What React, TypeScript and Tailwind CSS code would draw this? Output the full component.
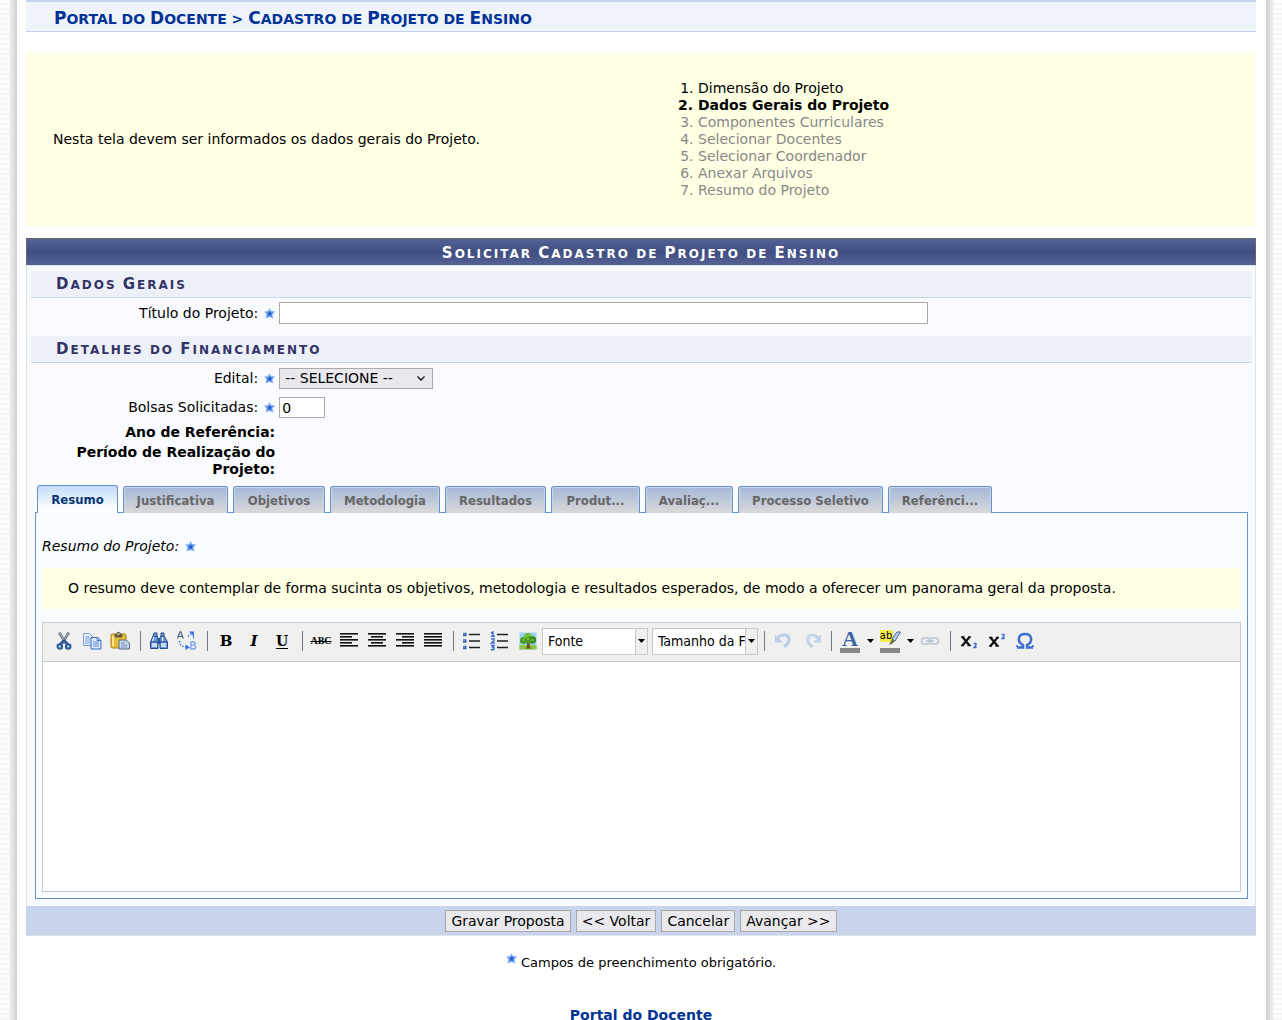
import React, { useState } from "react";

const base = "font-['Verdana','DejaVu_Sans',sans-serif]";
const condensed = "font-['Tahoma','DejaVu_Sans_Condensed','DejaVu_Sans',sans-serif]";

const steps = [
  "Dimensão do Projeto",
  "Dados Gerais do Projeto",
  "Componentes Curriculares",
  "Selecionar Docentes",
  "Selecionar Coordenador",
  "Anexar Arquivos",
  "Resumo do Projeto",
];

const tabs = [
  { label: "Resumo", width: "w-[81px]" },
  { label: "Justificativa", width: "w-[105px]" },
  { label: "Objetivos", width: "w-[92px]" },
  { label: "Metodologia", width: "w-[110px]" },
  { label: "Resultados", width: "w-[101px]" },
  { label: "Produt...", width: "w-[89px]" },
  { label: "Avaliaç...", width: "w-[88px]" },
  { label: "Processo Seletivo", width: "w-[145px]" },
  { label: "Referênci...", width: "w-[104px]" },
];

function Star() {
  return (
    <svg width="11" height="11" viewBox="0 0 11 11" className="inline-block shrink-0" aria-hidden="true">
      <defs>
        <linearGradient id="starFill" x1="0" y1="0" x2="0.7" y2="1">
          <stop offset="0" stopColor="#b4d4fb" />
          <stop offset="0.55" stopColor="#4f88e6" />
          <stop offset="1" stopColor="#6ba2f3" />
        </linearGradient>
      </defs>
      <path d="M5.500.4 7 3.200l3.800.3-2.500 2.700.9 4-3.700-1.400-3.700 1.400.9-4L.2 3.500 4 3.200z" fill="url(#starFill)" stroke="#a9cbf9" strokeWidth=".6" />
      <path d="M5.600 3.600 6.400 5l1.600.2-1.200 1.200.2 1.500-1.500-.8-1.300.6.500-1.700L3.600 5 5 4.900z" fill="#2158c6" />
    </svg>
  );
}

/* Capitals for every letter, with the letters after each initial set smaller. */
function SmallCaps({ text, rest }: { text: string; rest: string }) {
  return (
    <>
      {text.split(/([A-Z])/).map((part, i) =>
        i % 2 === 1 ? part : part === "" ? null : (
          <span key={i} className={`uppercase ${rest}`}>{part}</span>
        ),
      )}
    </>
  );
}

function Section({ text }: { text: string }) {
  return (
    <h2 className="h-[27px] border-b border-[#c8d5ec] bg-[#ecf1f9] pl-[25px] text-[15px] leading-[26px] font-bold tracking-[2px] text-[#333366]">
      <SmallCaps text={text} rest="text-[12px]" />
    </h2>
  );
}

function Tool({ label, children }: { label: string; children: React.ReactNode }) {
  return (
    <button type="button" aria-label={label} title={label} className="flex h-7 w-7 shrink-0 items-center justify-center">
      <svg width="20" height="20" viewBox="0 0 20 20" fill="none" aria-hidden="true">
        {children}
      </svg>
    </button>
  );
}

function Separator() {
  return (
    <span className="flex w-[11px] shrink-0 justify-end pr-1">
      <span className="h-5 w-px bg-[#77778a]" />
    </span>
  );
}

function MenuArrow({ label }: { label: string }) {
  return (
    <button type="button" aria-label={label} className="flex h-7 w-3 shrink-0 items-center justify-center">
      <svg width="7" height="4" viewBox="0 0 7 4" aria-hidden="true">
        <path d="M0 0h7L3.500 4z" fill="#000" />
      </svg>
    </button>
  );
}

function ToolSelect({ label }: { label: string }) {
  return (
    <div className="relative h-[27px] w-[106px] shrink-0">
      <select aria-label={label} className="h-full w-full appearance-none overflow-hidden border border-[#c8c8c8] bg-white pr-3 pl-[5px] text-[14px] text-black">
        <option>{label}</option>
      </select>
      <span className="pointer-events-none absolute inset-y-px right-px flex w-3 items-center justify-center border-l border-[#c8c8c8] bg-[#efefee]">
        <svg width="7" height="4" viewBox="0 0 7 4" aria-hidden="true">
          <path d="M0 0h7L3.500 4z" fill="#000" />
        </svg>
      </span>
    </div>
  );
}

function Lines({ rows }: { rows: [number, number][] }) {
  return (
    <>
      {rows.map(([x, w], i) => (
        <rect key={i} x={x} y={2 + i * 3} width={w} height="1.6" fill="#111" />
      ))}
    </>
  );
}

function Toolbar() {
  return (
    <div className={`flex h-[39px] items-center border-b border-[#c4ccd4] bg-[#f0f0ee] pb-0.5 pl-[7px] ${condensed}`}>
      <Tool label="Recortar">
        <path d="M5.200 1.500 12 12.500M14.800 1.500 8 12.500" stroke="#66717e" strokeWidth="2.600" />
        <path d="M5.600 1.800 10 9M14.400 1.800 10.500 8" stroke="#b6c2ce" strokeWidth=".9" />
        <path d="m10 9-4 4.500M10 9l4 4.500" stroke="#2f5d9c" strokeWidth="2.600" />
        <circle cx="5.800" cy="15.500" r="2.200" stroke="#2f5d9c" strokeWidth="2.200" />
        <circle cx="14.200" cy="15.500" r="2.200" stroke="#2f5d9c" strokeWidth="2.200" />
      </Tool>
      <Tool label="Copiar">
        <path d="M1.500 2.500h6l3 3v9h-9z" fill="#e3eefc" stroke="#7b9fd6" />
        <path d="M3 6h5M3 8h5M3 10h5M3 12h5" stroke="#81a7df" />
        <path d="M9 6.500h6.500l3.500 3v8.500H9z" fill="#dce9fb" stroke="#3c68bd" />
        <path d="M15.200 6.500v3H19" stroke="#3c68bd" />
        <path d="M11 11h6M11 13h6M11 15h6" stroke="#5d8bd8" />
      </Tool>
      <Tool label="Colar">
        <rect x="1" y="3" width="15" height="14" rx="1.500" fill="#e8bd32" stroke="#a87f22" />
        <path d="M3 5v10" stroke="#fbe591" strokeWidth="2" />
        <path d="M5 3.500h1.500C6.500.5 10.500.5 10.500 3.500H12V6H5z" fill="#6b6242" stroke="#5c563c" strokeWidth=".9" />
        <path d="M7 3h3" stroke="#e8dfae" />
        <path d="M9 9h7l3.500 3v6H9z" fill="#c4d5ec" stroke="#596b86" />
        <path d="M11 12h4M11 14h6M11 16h6" stroke="#7e98bf" />
      </Tool>
      <Separator />
      <Tool label="Localizar">
        <path d="M5 2h3v3l1 2v10.500H1.500V11L4 5zM12 2h3v3l3.500 6v6.500H11V7l1-2z" fill="#6f95d2" stroke="#234a8e" />
        <path d="M9 7h2v6H9z" fill="#2b539c" />
        <path d="M3 12h5v4H3zM12 12h5v4h-5z" fill="#c8dcf6" />
        <path d="m5.500 5-2 5M13.500 5v5" stroke="#dfebfb" strokeWidth="1.200" />
        <path d="M4.500 5.500H8M12 5.500h3.500M2 11h6.500M11.500 11H18" stroke="#234a8e" />
      </Tool>
      <Tool label="Localizar e substituir">
        <path d="M.5 7.500 3 .8h.8l2.500 6.700M1.500 5.300h3.800" stroke="#536584" strokeWidth="1.200" />
        <path d="M14 11h2.500q2 .2 1.600 2-.3 1-1.600 1.100 2.100 0 2.100 2-.1 1.900-2.300 1.900H14zM14 14.200h2.500" stroke="#78a0f2" strokeWidth="1.300" />
        <path d="M2.500 10q.2 5.500 6.500 6.200M11 5.500l4-3.500" stroke="#3770ec" strokeWidth="1.500" strokeDasharray="1.500 1.500" />
        <path d="m8.500 13.500 4.500 2.800-4.500 2.700zM12 .5h5v5z" fill="#3770ec" />
        <path d="M16.500 5v3" stroke="#3770ec" strokeWidth="1.400" strokeDasharray="1.500 1" />
      </Tool>
      <Separator />
      <button type="button" aria-label="Negrito" className="h-7 w-7 shrink-0 font-['DejaVu_Serif',serif] text-[15px] leading-7 font-bold text-black">B</button>
      <button type="button" aria-label="Itálico" className="h-7 w-7 shrink-0 font-['DejaVu_Serif',serif] text-[15px] leading-7 font-bold text-black italic">I</button>
      <button type="button" aria-label="Sublinhado" className="h-7 w-7 shrink-0 font-['DejaVu_Serif',serif] text-[14px] leading-7 font-bold text-black underline underline-offset-2">U</button>
      <Separator />
      <button type="button" aria-label="Tachado" className="h-7 w-7 shrink-0 font-['Liberation_Serif',serif] text-[10px] leading-7 font-bold text-black line-through">ABC</button>
      <Tool label="Alinhar à esquerda">
        <Lines rows={[[1, 18], [1, 12], [1, 18], [1, 12], [1, 18]]} />
      </Tool>
      <Tool label="Centralizar">
        <Lines rows={[[1, 18], [4, 12], [1, 18], [4, 12], [1, 18]]} />
      </Tool>
      <Tool label="Alinhar à direita">
        <Lines rows={[[1, 18], [7, 12], [1, 18], [7, 12], [1, 18]]} />
      </Tool>
      <Tool label="Justificar">
        <Lines rows={[[1, 18], [1, 18], [1, 18], [1, 18], [1, 18]]} />
      </Tool>
      <Separator />
      <Tool label="Lista com marcadores">
        <path d="M7 3.500h11M7 10h11M7 16.500h11" stroke="#222" strokeWidth="1.500" />
        <path d="M1 1.800h3.500v3.400H1zM1 8.300h3.500v3.400H1zM1 14.800h3.500v3.400H1z" fill="#3563b8" />
        <path d="M1.500 2.300h1.200v1.200H1.500zM1.500 8.800h1.200V10H1.500zM1.500 15.300h1.200v1.200H1.500z" fill="#9ec0f5" />
      </Tool>
      <Tool label="Lista numerada">
        <path d="M7 3.500h11M7 10h11M7 16.500h11" stroke="#222" strokeWidth="1.500" />
        <path d="m1 2 2-1v4M1 5.300h4M1 8h3v1.500L1.500 12H5M1 14.500h3l-1.500 2q2.500 0 1.300 1.800-1.300.8-3 .2" stroke="#3a69cc" strokeWidth="1.400" />
      </Tool>
      <Tool label="Inserir imagem">
        <rect x="1.500" y="1.500" width="17" height="17" fill="#9bd2f5" />
        <path d="M1.500 14h17v4.500h-17z" fill="#8cc63f" />
        <path d="M9 10h2.500l.5 6 2 1.500H7L9 16z" fill="#734d22" />
        <circle cx="5.500" cy="9.500" r="3.500" fill="#469a24" />
        <circle cx="10" cy="6" r="4" fill="#68b82e" />
        <circle cx="14.500" cy="9" r="3.700" fill="#368a20" />
        <circle cx="10" cy="9.500" r="3" fill="#4b9b25" />
        <path d="M7 5h2M11 4h2M4 9h2M13 9h3M9 8h2" stroke="#a7db58" />
      </Tool>
      <div className="flex gap-1">
        <ToolSelect label="Fonte" />
        <ToolSelect label="Tamanho da Fonte" />
      </div>
      <Separator />
      <Tool label="Desfazer">
        <path d="M4 7.500C8 3 15.500 2.500 16 8q.2 4-5 8" stroke="#bccceb" strokeWidth="3" />
        <path d="M2 3.500v8h8z" fill="#bccceb" />
      </Tool>
      <span className="w-0.5 shrink-0" />
      <Tool label="Refazer">
        <path d="M16 7.500C12 3 5 3 4.500 8q-.2 4 5 8" stroke="#bfd0e8" strokeWidth="3" />
        <path d="M4.500 8C5 4 11 4 14 8" stroke="#e3ecf7" />
        <path d="M18 3.500v8h-8z" fill="#bfd0e8" />
      </Tool>
      <span className="flex w-[9px] shrink-0 justify-end pr-1">
        <span className="h-5 w-px bg-[#77778a]" />
      </span>
      <div className="flex w-7 shrink-0 flex-col items-center">
        <button type="button" aria-label="Cor do texto" className="h-[17px] w-5 font-['Liberation_Serif',serif] text-[22px] leading-[17px] font-bold text-[#3c66a6]">A</button>
        <span className="mt-px h-[5px] w-5 bg-[#888888]" />
      </div>
      <MenuArrow label="Escolher cor do texto" />
      <div className="flex w-7 shrink-0 flex-col items-center">
        <button type="button" aria-label="Cor de fundo" className="flex h-[17px] w-[21px] items-start">
          <span className="h-3 w-[13px] bg-[#f5ec4b] text-[11px] leading-3 text-black">ab</span>
          <svg width="12" height="17" viewBox="0 0 12 17" className="-ml-1 shrink-0" aria-hidden="true">
            <path d="M8 2h3.500L6 11l-3-2z" fill="#b8cfe8" stroke="#476996" />
            <path d="m3 9 3 2-3 3-3 1z" fill="#777042" />
          </svg>
        </button>
        <span className="mt-px h-[5px] w-5 bg-[#888888]" />
      </div>
      <MenuArrow label="Escolher cor de fundo" />
      <Tool label="Inserir link">
        <rect x="1.500" y="7" width="9" height="6" rx="3" stroke="#c5ccda" strokeWidth="2" />
        <rect x="9.500" y="7" width="9" height="6" rx="3" stroke="#c5ccda" strokeWidth="2" />
        <path d="M6 10h8" stroke="#b6bfcc" strokeWidth="1.500" />
      </Tool>
      <Separator />
      <Tool label="Subscrito">
        <path d="m3.500 6 7 8.500M10.500 6l-7 8.500" stroke="#111" strokeWidth="2.200" />
        <path d="M2 6h3.500M9 6h3M2 14.500h3M8.500 14.500H12" stroke="#111" strokeWidth="1.300" />
        <path d="M14.500 12.500H17v1.700L15 16.500h2.800" stroke="#3a6ccf" strokeWidth="1.300" />
      </Tool>
      <Tool label="Sobrescrito">
        <path d="m3.500 6.500 7 8.500M10.500 6.500l-7 8.500" stroke="#111" strokeWidth="2.200" />
        <path d="M2 6.500h3.500M9 6.500h3M2 15h3M8.500 15H12" stroke="#111" strokeWidth="1.300" />
        <path d="M14.500 3.500H17v1.700L15 7.500h2.800" stroke="#3a6ccf" strokeWidth="1.300" />
      </Tool>
      <Tool label="Inserir caractere especial">
        <path d="M2 16.500h6v-2.300C1.500 10.500 3 3 10 3s8.500 7.500 2 11.200v2.300h6" stroke="#3c6fd0" strokeWidth="2.500" />
        <path d="M2 16v-2M18 16v-2" stroke="#3c6fd0" strokeWidth="1.500" />
      </Tool>
    </div>
  );
}

const fieldRow = "grid grid-cols-[20%_1fr] items-center gap-x-1";
const fieldLabel = "flex items-center justify-end gap-1.5";
const action = "h-[22px] border border-[#a9a9a9] bg-[#e9e9ed] px-[5px] leading-5 text-black";

export default function App() {
  const [active, setActive] = useState(0);
  return (
    <div className={`flex bg-white text-[14px] leading-[17px] text-black ${base}`}>
      <div className="flex w-[17px] shrink-0">
        <div className="flex-1 bg-[repeating-linear-gradient(#fdfdfd_0_3px,#f6f6f6_3px_5px)]" />
        <div className="w-2 bg-linear-to-r from-[#f4f4f4] to-[#cfcfcf]" />
      </div>
      <div className="min-w-0 flex-1 pr-2.5 pl-[9px]">
        <h1 className="h-8 border-t-2 border-b border-[#c4d2eb] bg-[#eff3fa] pl-7 text-[17px] leading-8 font-bold text-[#003395]">
          <a href="#portal"><SmallCaps text="Portal do Docente" rest="text-[14px]" /></a>
          <SmallCaps text=" > Cadastro de Projeto de Ensino" rest="text-[14px]" />
        </h1>

        <div className="mt-5 grid h-[175px] grid-cols-2 items-center border border-[#fafaf3] bg-[#ffffe4]">
          <p className="pl-[26px]">Nesta tela devem ser informados os dados gerais do Projeto.</p>
          <ol className="list-decimal pl-[57px]">
            {steps.map((step, i) => (
              <li key={step} className={i === 0 ? "" : i === 1 ? "font-bold" : "text-[#888888]"}>
                {step}
              </li>
            ))}
          </ol>
        </div>

        <form className="mt-[11px]" onSubmit={(e) => e.preventDefault()}>
          <h2 className="h-[27px] border border-b-0 border-[#666666] bg-linear-to-b from-[#546294] via-[#404e82] to-[#546294] text-center text-[15px] leading-7 font-bold tracking-[2px] text-white">
            <SmallCaps text="Solicitar Cadastro de Projeto de Ensino" rest="text-[12px]" />
          </h2>
          <div className="border border-b-0 border-[#dee2ea] bg-[#fafbfe] pt-[5px] pr-[3px] pb-[7px] pl-1">
            <Section text="Dados Gerais" />
            <div className={`${fieldRow} mt-1`}>
              <label htmlFor="titulo" className={fieldLabel}>Título do Projeto: <Star /></label>
              <input id="titulo" type="text" className="h-[22px] w-[649px] max-w-full border border-[#a9a9a9] bg-white px-0.5" />
            </div>
            <div className="mt-3">
              <Section text="Detalhes do Financiamento" />
            </div>
            <div className={`${fieldRow} mt-[5px]`}>
              <label htmlFor="edital" className={fieldLabel}>Edital: <Star /></label>
              <div className="relative w-[154px]">
                <select id="edital" className="block h-[21px] w-full appearance-none border border-[#a9a9a9] bg-[#e9e9ed] pl-[5px] text-[14px] leading-[17px] text-black">
                  <option>-- SELECIONE --</option>
                </select>
                <svg width="8" height="5" viewBox="0 0 8 5" fill="none" className="pointer-events-none absolute top-2 right-2" aria-hidden="true">
                  <path d="m.5.5 3.500 3.500L7.500.5" stroke="#111" strokeWidth="1.300" />
                </svg>
              </div>
            </div>
            <div className={`${fieldRow} mt-2`}>
              <label htmlFor="bolsas" className={fieldLabel}>Bolsas Solicitadas: <Star /></label>
              <input id="bolsas" type="text" defaultValue="0" className="h-[21px] w-[46px] border border-[#a9a9a9] bg-white px-0.5" />
            </div>
            <div className={`${fieldRow} mt-1.5`}>
              <p className="text-right font-bold">Ano de Referência:</p>
            </div>
            <div className={`${fieldRow} mt-[3px]`}>
              <p className="pl-8 text-right font-bold">Período de Realização do Projeto:</p>
            </div>

            <div className="mx-1 mt-[7px]">
              <div role="tablist" className={`relative -mb-px flex items-end gap-[5px] pl-0.5 text-[13px] ${condensed}`}>
                {tabs.map((tab, i) => (
                  <button
                    key={tab.label}
                    type="button"
                    role="tab"
                    aria-selected={active === i}
                    onClick={() => setActive(i)}
                    className={`${tab.width} shrink-0 rounded-t-[3px] border border-b-0 border-[#6593cf] text-center font-bold whitespace-nowrap ${
                      active === i
                        ? "h-7 bg-linear-to-b from-[#c3daf9] to-[#f9fdff] to-80% text-[#083772]"
                        : "h-[27px] bg-linear-to-b from-[#a4b8d8] to-[#d9d9d9] text-[#666666] shadow-[inset_1px_1px_0_#cbd5e2,inset_-1px_0_0_#cbd5e2]"
                    }`}
                  >
                    {tab.label}
                  </button>
                ))}
              </div>
              <div role="tabpanel" className="border border-[#6593cf] bg-[#f9fdff] px-1.5 pt-[25px] pb-1.5">
                <label htmlFor="resumo" className="flex items-center gap-1.5 italic">Resumo do Projeto: <Star /></label>
                <p className="mt-[13px] mr-px ml-px bg-[#ffffe4] py-3 pl-[25px]">
                  O resumo deve contemplar de forma sucinta os objetivos, metodologia e resultados esperados, de modo a oferecer um panorama geral da proposta.
                </p>
                <div className="mt-[13px] border border-[#c4ccd4]">
                  <Toolbar />
                  <textarea id="resumo" className="block h-[229px] w-full resize-none bg-white p-2 outline-none" />
                </div>
              </div>
            </div>
          </div>
          <div className="flex h-[30px] items-center justify-center gap-[5px] border-b border-[#dee2ea] bg-[#c8d4ec]">
            <button type="submit" className={action}>Gravar Proposta</button>
            <button type="button" className={action}>&lt;&lt; Voltar</button>
            <button type="button" className={action}>Cancelar</button>
            <button type="button" className={action}>Avançar &gt;&gt;</button>
          </div>
        </form>

        <p className="mt-[17px] flex items-start justify-center gap-1 text-[13px]">
          <Star />
          <span className="pt-px">Campos de preenchimento obrigatório.</span>
        </p>
        <p className="mt-[39px] text-center leading-[10px] font-bold text-[#003395]">
          <a href="#portal">Portal do Docente</a>
        </p>
      </div>
      <div className="flex w-4 shrink-0">
        <div className="w-2 bg-linear-to-l from-[#f4f4f4] to-[#cfcfcf]" />
        <div className="flex-1 bg-[repeating-linear-gradient(#fdfdfd_0_3px,#f6f6f6_3px_5px)]" />
      </div>
    </div>
  );
}
